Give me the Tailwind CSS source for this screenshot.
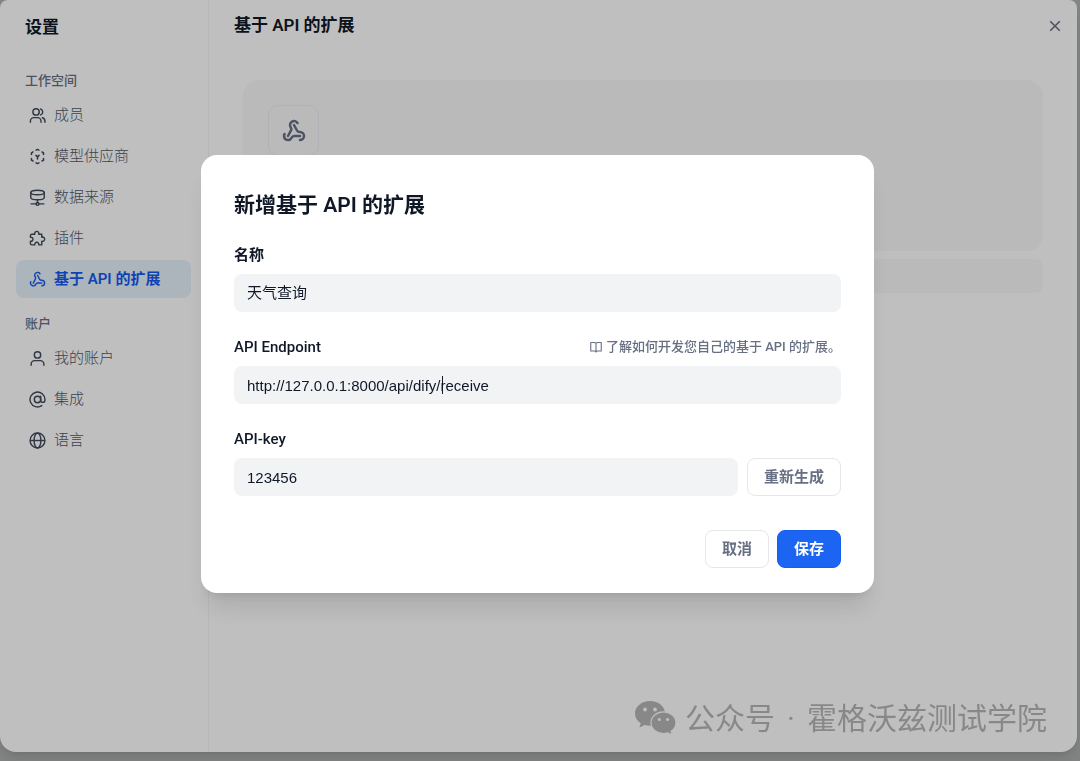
<!DOCTYPE html>
<html lang="zh-CN">
<head>
  <meta charset="UTF-8" />
  <meta name="viewport" content="width=device-width, initial-scale=1.0"/>
  <title>设置 - 基于 API 的扩展</title>
  <script src="https://cdn.jsdelivr.net/npm/@tailwindcss/browser@4"></script>
</head>
<body class="bg-[#afb1b0] font-['Roboto','Noto_Sans_CJK_SC',sans-serif] text-[15px] text-[#101828] h-screen overflow-hidden flex flex-col">
  <!-- Settings panel -->
  <div class="flex flex-1 mr-[3px] mb-[9px] bg-white rounded-t-lg rounded-b-2xl shadow-lg">
    <!-- Sidebar -->
    <aside class="w-[209px] shrink-0 border-r border-[#f4f4f5] pl-4 pr-[17px] pt-[13px]">
      <h1 class="h-7 leading-7 pl-[9px] text-[17px] font-semibold">设置</h1>

      <h2 class="mt-[29px] h-[22px] leading-[22px] pl-[9px] text-[13px] font-medium text-[#676f83]">工作空间</h2>
      <nav class="mt-1 flex flex-col gap-[3px] font-light text-[#4f576a]">
        <a href="#" class="flex items-center gap-2 h-[38px] pl-[13px] rounded-lg">
          <svg class="size-[17px] text-[#404a5c]" viewBox="0 0 24 24" fill="none" stroke="currentColor" stroke-width="2" stroke-linecap="round" stroke-linejoin="round"><circle cx="10" cy="7" r="4.5"/><path d="M2 21.500v-1.500a5 5 0 0 1 5-5h5a5 5 0 0 1 5 5v1.500M16.500 2.800a4.500 4.500 0 0 1 0 8.400M19 15.200a5 5 0 0 1 3.500 4.800v1.500"/></svg>
          成员
        </a>
        <a href="#" class="flex items-center gap-2 h-[38px] pl-[13px] rounded-lg">
          <svg class="size-[17px] text-[#404a5c]" viewBox="0 0 24 24" fill="none" stroke="currentColor" stroke-width="2.200" stroke-linecap="round" stroke-linejoin="round"><path d="M10 3 12 2l2 1M18.500 5.600l2 1.200v2.200M20.500 15v2.200l-2 1.200M14 21l-2 1-2-1M5.500 18.400l-2-1.200V15M3.500 9V6.800l2-1.200M12 12.500V15.500M9.800 10.500l2.200 2 2.200-2"/></svg>
          模型供应商
        </a>
        <a href="#" class="flex items-center gap-2 h-[38px] pl-[13px] rounded-lg">
          <svg class="size-[17px] text-[#404a5c]" viewBox="0 0 24 24" fill="none" stroke="currentColor" stroke-width="2" stroke-linecap="round" stroke-linejoin="round"><ellipse cx="12" cy="5" rx="9.500" ry="3.200"/><path d="M2.500 5v7c0 1.800 4 3.200 9.500 3.200s9.500-1.400 9.500-3.200V5M12 15.200V19M3 21h7M14 21h7"/><circle cx="12" cy="21" r="2"/></svg>
          数据来源
        </a>
        <a href="#" class="flex items-center gap-2 h-[38px] pl-[13px] rounded-lg">
          <svg class="size-[17px] text-[#404a5c]" viewBox="0 0 24 24" fill="none" stroke="currentColor" stroke-width="2" stroke-linejoin="round"><path d="M4 6h4.200a3 3 0 1 1 5.600 0H18v4.200a3 3 0 1 1 0 5.600V21h-4.200a2.900 2.900 0 1 0-5.600 0H4a2 2 0 0 1-2-2v-3.200a2.900 2.900 0 1 0 0-5.600V8a2 2 0 0 1 2-2z"/></svg>
          插件
        </a>
        <a href="#" class="flex items-center gap-2 h-[38px] pl-[13px] rounded-lg bg-[#e6f1fb] font-semibold text-[#155aef]">
          <svg class="size-[17px]" viewBox="0 0 24 24" fill="none" stroke="currentColor" stroke-width="2" stroke-linecap="round" stroke-linejoin="round"><path d="M18 16.980h-5.990c-1.100 0-1.950.940-2.480 1.900A4 4 0 0 1 2 17c.010-.700.200-1.400.570-2"/><path d="m6 17 3.130-5.780c.530-.970.100-2.180-.500-3.100a4 4 0 1 1 6.890-4.060"/><path d="m12 6 3.130 5.730C15.660 12.700 16.900 13 18 13a4 4 0 0 1 0 8"/></svg>
          基于 API 的扩展
        </a>
      </nav>

      <h2 class="mt-[15px] h-[22px] leading-[22px] pl-[9px] text-[13px] font-medium text-[#676f83]">账户</h2>
      <nav class="mt-1 flex flex-col gap-[3px] font-light text-[#4f576a]">
        <a href="#" class="flex items-center gap-2 h-[38px] pl-[13px] rounded-lg">
          <svg class="size-[17px] text-[#404a5c]" viewBox="0 0 24 24" fill="none" stroke="currentColor" stroke-width="2" stroke-linecap="round" stroke-linejoin="round"><circle cx="12" cy="7" r="4.500"/><path d="M3 21.500V20a5 5 0 0 1 5-5h8a5 5 0 0 1 5 5v1.500"/></svg>
          我的账户
        </a>
        <a href="#" class="flex items-center gap-2 h-[38px] pl-[13px] rounded-lg">
          <svg class="size-[17px] text-[#404a5c]" viewBox="0 0 24 24" fill="none" stroke="currentColor" stroke-width="2" stroke-linecap="round" stroke-linejoin="round"><circle cx="12" cy="12" r="4.500"/><path d="M16.500 7.500v5.500a3 3 0 0 0 6 0v-1a10.500 10.500 0 1 0-4.500 8.600"/></svg>
          集成
        </a>
        <a href="#" class="flex items-center gap-2 h-[38px] pl-[13px] rounded-lg">
          <svg class="size-[17px] text-[#404a5c]" viewBox="0 0 24 24" fill="none" stroke="currentColor" stroke-width="2"><circle cx="12" cy="12" r="10.500"/><ellipse cx="12" cy="12" rx="4.800" ry="10.500"/><path d="M1.500 12h21"/></svg>
          语言
        </a>
      </nav>
    </aside>

    <!-- Main Content -->
    <main class="flex-1 pt-3">
      <div class="flex items-center justify-between h-7 pl-[25px] pr-3">
        <h2 class="text-[17px] font-semibold">基于 API 的扩展</h2>
        <button type="button" aria-label="关闭" class="size-5 flex items-center justify-center text-[#676f83]">
          <svg class="size-3" viewBox="0 0 12 12" fill="none" stroke="currentColor" stroke-width="1.600"><path d="M1.200 1.200l9.600 9.600M10.800 1.200l-9.600 9.600"/></svg>
        </button>
      </div>
      <div class="mt-10 ml-[34px] mr-[34px] flex flex-col gap-2">
        <div class="h-[171px] rounded-2xl bg-[#f9f9fa] p-[25px]">
          <div class="size-[51px] flex items-center justify-center rounded-[10px] border border-[#ececf5] text-[#676f83]">
            <svg class="size-6" viewBox="0 0 24 24" fill="none" stroke="currentColor" stroke-width="2.500" stroke-linecap="round" stroke-linejoin="round"><path d="M18 16.980h-5.990c-1.100 0-1.950.940-2.480 1.900A4 4 0 0 1 2 17c.010-.700.200-1.400.570-2"/><path d="m6 17 3.130-5.780c.530-.970.100-2.180-.500-3.100a4 4 0 1 1 6.890-4.060"/><path d="m12 6 3.130 5.730C15.660 12.700 16.900 13 18 13a4 4 0 0 1 0 8"/></svg>
          </div>
        </div>
        <div class="h-[34px] rounded-lg bg-[#f9f9fa]"></div>
      </div>
    </main>
  </div>

  <!-- Modal -->
  <div class="fixed inset-0 flex items-center justify-center bg-black/25 pr-[5px] pb-[13px]">
    <form role="dialog" aria-labelledby="modalTitle" class="w-full max-w-[673px] flex flex-col gap-[22px] bg-white rounded-2xl shadow-xl pt-[33px] px-[33px] pb-[25px]">
      <h2 id="modalTitle" class="h-8 leading-[34px] text-[21px] font-semibold">新增基于 API 的扩展</h2>
      <div class="flex flex-col gap-[6px]">
        <label for="extName" class="h-[26px] leading-[26px] font-semibold">名称</label>
        <input id="extName" type="text" value="天气查询" class="h-[38px] w-full px-[13px] pb-[3px] rounded-lg bg-[#f2f3f5] outline-none" />
      </div>
      <div class="flex flex-col gap-[6px]">
        <div class="flex items-center justify-between h-[26px]">
          <label for="extEndpoint" class="font-medium">API Endpoint</label>
          <a href="#" class="flex items-center gap-1 text-[13px] font-medium text-[#676f83]">
            <svg class="size-3" viewBox="0 0 24 24" fill="none" stroke="currentColor" stroke-width="2.200" stroke-linejoin="round"><path d="M12 5.500V23M12 5.500A3 3 0 0 0 9 3H1.500v17H9a3 3 0 0 1 3 2 3 3 0 0 1 3-2h7.500V3H15a3 3 0 0 0-3 2.500z"/></svg>
            了解如何开发您自己的基于 API 的扩展。
          </a>
        </div>
        <div class="relative">
          <input id="extEndpoint" type="text" value="http://127.0.0.1:8000/api/dify/receive" class="h-[38px] w-full px-[13px] rounded-lg bg-[#f2f3f5] font-['Liberation_Sans',sans-serif] outline-none" />
          <span class="absolute left-[208px] top-[10px] w-px h-[18px] bg-[#101828]"></span>
        </div>
      </div>
      <div class="flex flex-col gap-[6px]">
        <label for="extKey" class="h-[26px] leading-[26px] font-medium">API-key</label>
        <div class="flex gap-[9px]">
          <input id="extKey" type="text" value="123456" class="h-[38px] flex-1 px-[13px] rounded-lg bg-[#f2f3f5] font-['Liberation_Sans',sans-serif] outline-none" />
          <button type="button" class="h-[38px] px-4 rounded-lg border border-[#e4e6eb] bg-white font-semibold text-[#676f83]">重新生成</button>
        </div>
      </div>
      <div class="mt-3 flex justify-end gap-2">
        <button type="button" class="h-[38px] px-4 rounded-lg border border-[#e4e6eb] bg-white font-semibold text-[#676f83]">取消</button>
        <button type="submit" class="h-[38px] px-4 rounded-lg border border-[#155eef] bg-[#1c64f2] font-semibold text-white">保存</button>
      </div>
    </form>
  </div>

  <!-- Watermark -->
  <div class="fixed right-[33px] bottom-[21px] flex items-center h-11 text-[30px] text-[#888888]">
    <svg class="w-[42px] h-[34px] mr-2" viewBox="0 0 42 34">
      <path fill="currentColor" d="M15 0C6.700 0 0 5.500 0 12.500c0 4 2.200 7.500 5.700 9.800L4.500 26.500l5-2.500c1.700.500 3.600.800 5.500.800 8.300 0 15-5.500 15-12.400S23.300 0 15 0z"/>
      <path fill="currentColor" stroke="#bfbfbf" stroke-width="1.200" d="M28.500 10.800C21.700 10.800 16 15.500 16 21.700s5.700 10.900 12.500 10.900c1.500 0 3-.2 4.400-.7l4.300 2.200-1.100-3.800c3-2 4.900-5.100 4.900-8.600 0-6.200-5.700-10.900-12.500-10.900z"/>
      <g fill="#bfbfbf"><circle cx="10" cy="8.500" r="1.900"/><circle cx="20" cy="8.500" r="1.900"/><circle cx="24.300" cy="18.500" r="1.600"/><circle cx="32.600" cy="18.500" r="1.600"/></g>
    </svg>
    <span>公众号</span>
    <span class="w-8 text-center">·</span>
    <span>霍格沃兹测试学院</span>
  </div>
</body>
</html>
